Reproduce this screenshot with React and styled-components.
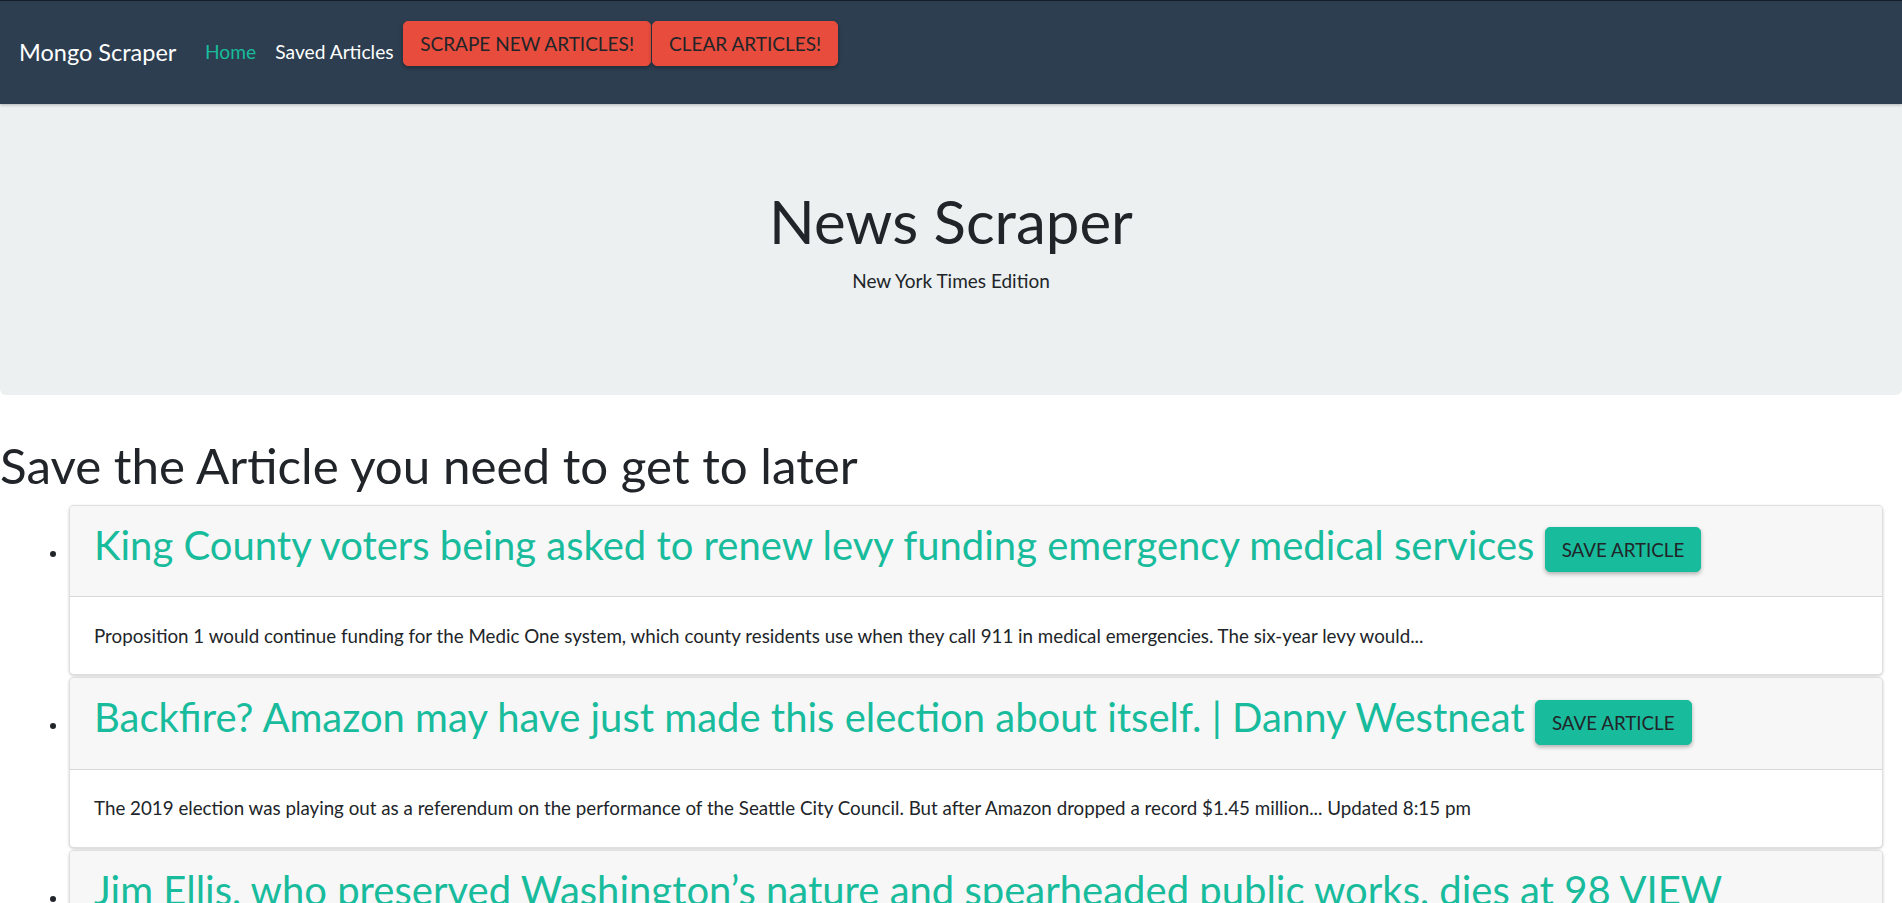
import React from "react";
import styled, { createGlobalStyle } from "styled-components";

const GlobalStyle = createGlobalStyle`
  html, body {
    margin: 0;
    padding: 0;
  }
  body {
    font-family: Lato, "Open Sans", sans-serif;
    font-size: 18.75px;
    line-height: 1.5;
    color: #212529;
    background: #fff;
  }
  ::-webkit-scrollbar { width: 3px; }
  ::-webkit-scrollbar-track { background: #fff; }
  ::-webkit-scrollbar-thumb { background: #c9c9c9; }
`;

const Navbar = styled.nav`
  position: relative;
  z-index: 1;
  display: flex;
  align-items: center;
  height: 103px;
  padding: 0 19px;
  background: #2c3e50;
  border-top: 1px solid #151d26;
  box-shadow: 0 1px 3px rgba(0, 0, 0, 0.25);
`;

const Brand = styled.a`
  margin-right: 19px;
  font-size: 23.5px;
  color: #fff;
  text-decoration: none;
`;

const NavLink = styled.a`
  padding: 0 9.6px;
  font-size: 19.2px;
  color: ${(p) => (p.$active ? "#18bc9c" : "#fff")};
  text-decoration: none;
`;

const Button = styled.button`
  padding: 8px 16px;
  font-family: inherit;
  font-size: 18.75px;
  line-height: 27px;
  color: #212529;
  text-transform: uppercase;
  background: ${(p) => p.$bg};
  border: 1px solid ${(p) => p.$bg};
  border-radius: 5px;
  box-shadow: 0 2px 4px rgba(0, 0, 0, 0.3);
  cursor: pointer;
`;

const NavButton = styled(Button)`
  align-self: flex-start;
  margin-top: 20px;
  margin-right: 1px;
  font-size: 19px;
`;

const Jumbotron = styled.header`
  padding: 81px 16px;
  text-align: center;
  background: #ecf0f1;
  border-radius: 0 0 6px 6px;
`;

const JumboTitle = styled.h1`
  margin: 0 0 9.6px;
  font-size: 60px;
  font-weight: 400;
  line-height: 1.2;
`;

const Lead = styled.p`
  margin: 0 0 19px;
  font-size: 19px;
`;

const PageTitle = styled.h1`
  margin: 41px 0 9.6px;
  font-size: 49.3px;
  font-weight: 400;
  line-height: 1.2;
`;

const ArticleList = styled.ul`
  margin: 0;
  padding: 0 19px 0 69px;
`;

const Item = styled.li`
  margin-bottom: 2px;
`;

const Card = styled.article`
  overflow: hidden;
  background: #fff;
  border: 1px solid rgba(0, 0, 0, 0.125);
  border-radius: 5px;
  box-shadow: 0 1px 3px rgba(0, 0, 0, 0.2);
`;

const CardHeader = styled.div`
  padding: 15px 24px 14.5px;
  background: #f7f7f7;
  border-bottom: 1px solid rgba(0, 0, 0, 0.125);
`;

const Title = styled.h2`
  margin: 0 0 9.6px;
  font-size: 40px;
  font-weight: 400;
  line-height: 1.2;
  color: #18bc9c;
`;

const SaveButton = styled(Button)`
  vertical-align: middle;
`;

const CardBody = styled.div`
  padding: 24.5px 24px;
  font-size: 18.75px;
  line-height: 28px;
`;

const articles = [
  {
    title: "King County voters being asked to renew levy funding emergency medical services",
    summary:
      "Proposition 1 would continue funding for the Medic One system, which county residents use when they call 911 in medical emergencies. The six-year levy would...",
  },
  {
    title: "Backfire? Amazon may have just made this election about itself. | Danny Westneat",
    summary:
      "The 2019 election was playing out as a referendum on the performance of the Seattle City Council. But after Amazon dropped a record $1.45 million... Updated 8:15 pm",
  },
  {
    title: "Jim Ellis, who preserved Washington’s nature and spearheaded public works, dies at 98  VIEW",
    summary:
      "Jim Ellis, the civic leader behind the cleanup of Lake Washington and the creation of the region’s parks and trails, has died.",
  },
];

export default function App() {
  return (
    <>
      <GlobalStyle />
      <Navbar>
        <Brand href="#">Mongo Scraper</Brand>
        <NavLink href="#" $active>Home</NavLink>
        <NavLink href="#">Saved Articles</NavLink>
        <NavButton $bg="#e74c3c">Scrape New Articles!</NavButton>
        <NavButton $bg="#e74c3c">Clear Articles!</NavButton>
      </Navbar>
      <Jumbotron>
        <JumboTitle>News Scraper</JumboTitle>
        <Lead>New York Times Edition</Lead>
      </Jumbotron>
      <PageTitle>Save the Article you need to get to later</PageTitle>
      <ArticleList>
        {articles.map((a) => (
          <Item key={a.title}>
            <Card>
              <CardHeader>
                <Title>
                  {a.title}{" "}
                  <SaveButton $bg="#18bc9c">Save Article</SaveButton>
                </Title>
              </CardHeader>
              <CardBody>{a.summary}</CardBody>
            </Card>
          </Item>
        ))}
      </ArticleList>
    </>
  );
}
